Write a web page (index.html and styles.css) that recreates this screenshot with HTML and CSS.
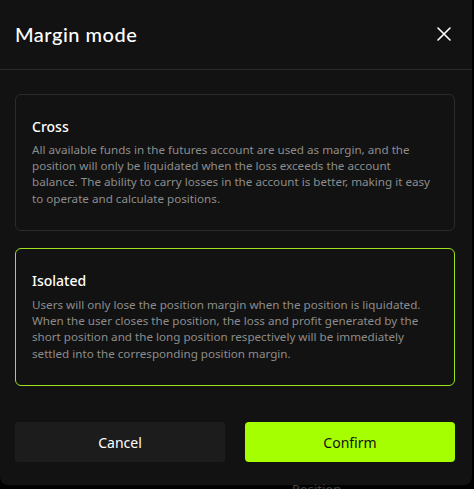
FILE: index.html
```html
<!DOCTYPE html>
<html>
<head>
<meta charset="utf-8">
<link rel="stylesheet" href="styles.css">
</head>
<body>
<div class="modal">
  <div class="header">
    <div class="title">Margin mode</div>
    <button class="close" aria-label="Close">
      <svg width="14" height="14" viewBox="0 0 14 14"><path d="M1 1L13 13M13 1L1 13" stroke="#fff" stroke-width="1.6" stroke-linecap="round"/></svg>
    </button>
  </div>
  <div class="content">
    <div class="card">
      <div class="card-title">Cross</div>
      <div class="card-desc">All available funds in the futures account are used as margin, and the position will only be liquidated when the loss exceeds the account balance. The ability to carry losses in the account is better, making it easy to operate and calculate positions.</div>
    </div>
    <div class="card active">
      <div class="card-title">Isolated</div>
      <div class="card-desc">Users will only lose the position margin when the position is liquidated. When the user closes the position, the loss and profit generated by the short position and the long position respectively will be immediately settled into the corresponding position margin.</div>
    </div>
  </div>
  <div class="footer">
    <button class="btn cancel">Cancel</button>
    <button class="btn confirm">Confirm</button>
  </div>
</div>
<div class="under">Position</div>
</body>
</html>
```
FILE: styles.css
```css
* { box-sizing: border-box; }
html, body { margin: 0; padding: 0; background: #000; }
body { font-family: "Noto Sans", "Open Sans", sans-serif; color: #fff; width: 474px; height: 489px; overflow: hidden; position: relative; }
.modal {
  width: 472px;
  height: 485px;
  background: #121212;
  border-radius: 0 0 8px 8px;
  display: flex;
  flex-direction: column;
}
.header {
  height: 70px;
  border-bottom: 1px solid #2a2a2a;
  display: flex;
  align-items: center;
  justify-content: space-between;
  padding: 0 21px 2px 15px;
}
.title { font-family: "Lato", "Noto Sans", sans-serif; font-size: 20px; font-weight: 500; letter-spacing: 0.5px; }
.close { background: none; border: 0; padding: 0; display: flex; cursor: pointer; }
.content {
  padding: 24px 17px 0 15px;
  display: flex;
  flex-direction: column;
  gap: 17px;
}
.card {
  border: 1px solid #2b2b2b;
  border-radius: 6px;
  padding: 22px 18px 20px 16px;
  height: 137px;
}
.card.active { border-color: #9fe21e; height: 138px; }
.card-title { font-size: 14px; font-weight: 500; line-height: 20px; margin-bottom: 5px; }
.card.active .card-title { margin-bottom: 6px; }
.card-desc { font-size: 11.65px; line-height: 16.2px; color: #8c8c8c; }
.footer {
  display: flex;
  gap: 20px;
  padding: 36px 17px 0 15px;
}
.btn {
  flex: 1;
  height: 40px;
  border: 0;
  border-radius: 4px;
  font-family: "Noto Sans", sans-serif;
  font-size: 14px;
  font-weight: 400;
}
.cancel { background: #1c1c1c; color: #fff; border-radius: 2px; }
.confirm { background: #a6ff00; color: #111; }
.under { position: absolute; left: 292px; top: 481px; font-size: 13px; line-height: 16px; color: #444; }
```
